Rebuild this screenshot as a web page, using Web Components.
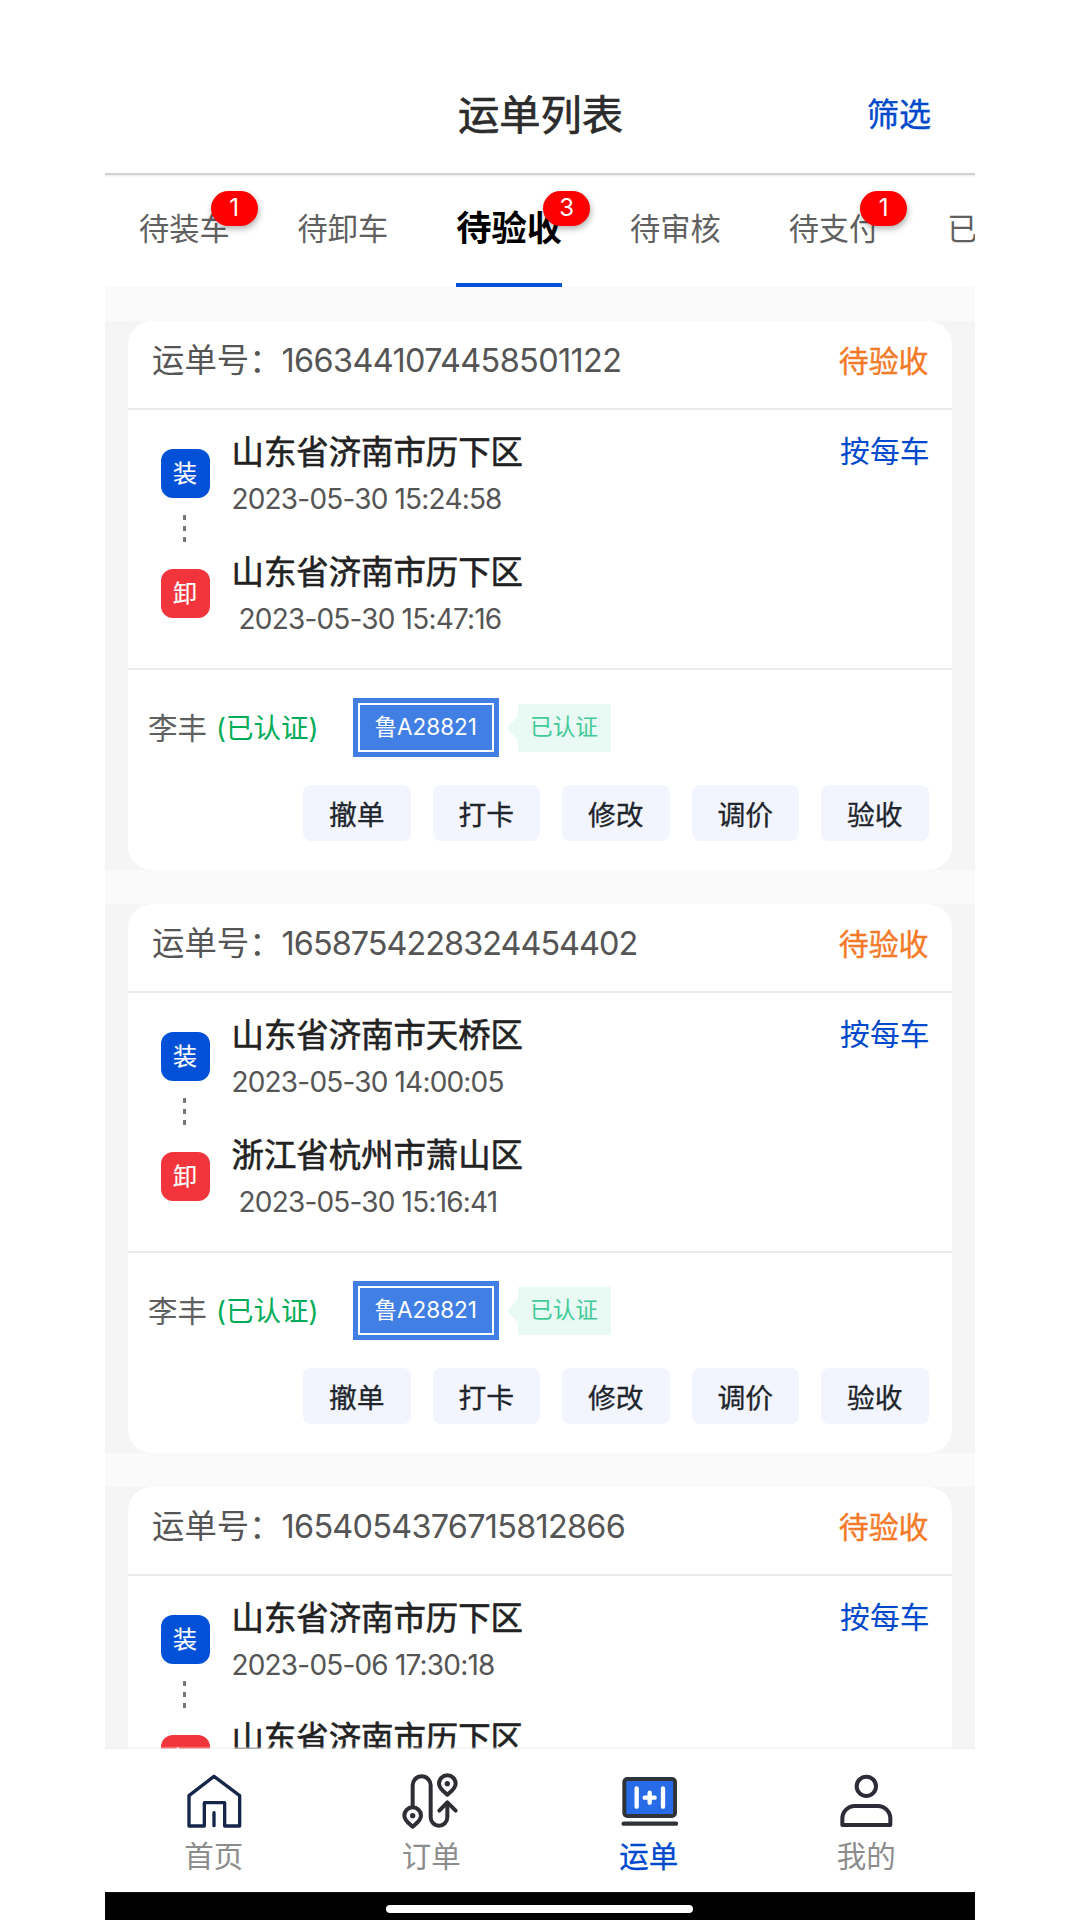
<!DOCTYPE html>
<html lang="zh-CN">
<head>
<meta charset="UTF-8">
<meta name="viewport" content="width=device-width, initial-scale=1.0">
<title>运单列表</title>
<style>
  body {
    margin: 0;
    background: #fff;
    font-family: Inter, "Noto Sans CJK SC", sans-serif;
  }
</style>
</head>
<body>
<waybill-app></waybill-app>

<script>
// Waybill list
const WAYBILLS = [
  {
    no: '1663441074458501122', spacing: '-0.62px',
    from: '山东省济南市历下区', fromTime: '2023-05-30 15:24:58',
    to: '山东省济南市历下区', toTime: '2023-05-30 15:47:16',
    driver: '李丰', plate: '鲁A28821'
  },
  {
    no: '1658754228324454402', spacing: '-0.96px',
    from: '山东省济南市天桥区', fromTime: '2023-05-30 14:00:05',
    to: '浙江省杭州市萧山区', toTime: '2023-05-30 15:16:41',
    driver: '李丰', plate: '鲁A28821'
  },
  {
    no: '1654054376715812866', spacing: '-0.72px',
    from: '山东省济南市历下区', fromTime: '2023-05-06 17:30:18',
    to: '山东省济南市历下区', toTime: ''
  }
];

const ICONS = {
  home: `
    <g fill="none" stroke="#14264a" stroke-width="10" stroke-linejoin="round" stroke-linecap="round">
      <path d="M90 19L167 77V168H122V98H61V168H15V77Z"/>
      <path d="M90 128V167"/>
    </g>`,
  order: `
    <g fill="none" stroke="#2f2e35" stroke-width="12" stroke-linejoin="round" stroke-linecap="round">
      <path d="M35 110V46a27 27 0 0 1 54 0V142a25 25 0 0 0 50 0V98"/>
      <path d="M115 122L139 97L164 122"/>
      <path d="M35 170C24 160 10 151 10 137a25 25 0 0 1 50 0C60 151 46 160 35 170Z"/>
      <path d="M139 74C128 64 114 55 114 41a25 25 0 0 1 50 0C164 55 150 64 139 74Z"/>
    </g>
    <circle cx="35" cy="137" r="8" fill="#2f2e35"/>
    <circle cx="139" cy="41" r="8" fill="#2f2e35"/>`,
  waybill: `
    <rect x="16" y="27" width="152" height="111" rx="9" fill="#276be6" stroke="#303338" stroke-width="12"/>
    <g fill="none" stroke="#fff" stroke-width="13" stroke-linecap="round">
      <path d="M53 55V110M132 55V110M77 83H107M92 68V98"/>
    </g>
    <path d="M14 161H171" stroke="#303338" stroke-width="13" stroke-linecap="round"/>`,
  mine: `
    <g fill="none" stroke="#2d2b38" stroke-width="12" stroke-linejoin="round">
      <circle cx="91" cy="49" r="29"/>
      <path d="M19 165V146a38 38 0 0 1 38 -38H125a38 38 0 0 1 38 38V165Z"/>
    </g>`
};

class NavHeader extends HTMLElement {
  constructor() {
    super();
    this.attachShadow({ mode: 'open' });
  }

  connectedCallback() {
    this.shadowRoot.innerHTML = `
      <style>
        :host {
          display: grid;
          grid-template-columns: 1fr auto 1fr;
          align-items: center;
          height: 116px;
          padding: 57px 44px 0 45px;
          border-bottom: 2px solid #d0d3d2;
          box-shadow: 0 1px 2px #e8e8e8;
          position: relative;
        }
        h1 {
          grid-column: 2;
          margin: 0;
          font-size: 41.3px;
          line-height: 62px;
          font-weight: 400;
          color: #2c2c2c;
          -webkit-text-stroke: 0.7px;
        }
        .action {
          justify-self: end;
          font-size: 32px;
          line-height: 46px;
          color: #0049cc;
          -webkit-text-stroke: 0.4px;
        }
      </style>
      <h1><slot></slot></h1>
      <span class="action">${this.getAttribute('action')}</span>
    `;
  }
}

class TabItem extends HTMLElement {
  constructor() {
    super();
    this.attachShadow({ mode: 'open' });
  }

  connectedCallback() {
    const badge = this.getAttribute('badge');
    this.shadowRoot.innerHTML = `
      <style>
        :host {
          display: block;
          flex: none;
          position: relative;
          box-sizing: border-box;
          height: 112px;
          font-size: 30.2px;
          line-height: 108px;
          color: #606060;
          border-bottom: 4px solid transparent;
        }
        :host([active]) {
          font-size: 35.3px;
          font-weight: 700;
          color: #000;
          border-bottom-color: #0050d8;
        }
        .badge {
          position: absolute;
          top: 16px;
          right: -28px;
          width: 47px;
          height: 35px;
          border-radius: 18px;
          background: #fe0000;
          box-shadow: 1px 3px 6px rgba(0, 0, 0, 0.3);
          color: #fff;
          font-size: 24px;
          font-weight: 400;
          line-height: 34px;
          text-align: center;
        }
      </style>
      <slot></slot>
      ${badge ? `<span class="badge">${badge}</span>` : ''}
    `;
  }
}

class ActionButton extends HTMLElement {
  constructor() {
    super();
    this.attachShadow({ mode: 'open' });
  }

  connectedCallback() {
    this.shadowRoot.innerHTML = `
      <style>
        :host {
          display: block;
          width: 107.5px;
          height: 56px;
          border-radius: 8px;
          background: #f2f5fe;
          color: #20242b;
          font-size: 27.8px;
          line-height: 60px;
          text-align: center;
          -webkit-text-stroke: 0.3px;
        }
      </style>
      <slot></slot>
    `;
  }
}

class RouteStop extends HTMLElement {
  constructor() {
    super();
    this.attachShadow({ mode: 'open' });
  }

  connectedCallback() {
    const isLoad = this.getAttribute('type') === 'load';
    this.shadowRoot.innerHTML = `
      <style>
        :host {
          display: flex;
          gap: 21.5px;
          height: 120px;
        }
        .mark {
          display: flex;
          flex-direction: column;
          align-items: center;
          width: 49px;
          padding-top: 20px;
        }
        .box {
          width: 49px;
          height: 49px;
          border-radius: 12px;
          background: ${isLoad ? '#0050d8' : '#f2353c'};
          color: #fff;
          font-size: 24px;
          line-height: 50px;
          text-align: center;
          text-indent: -1px;
          -webkit-text-stroke: 0.2px;
        }
        .dots {
          display: grid;
          gap: 6px;
          margin: 17px 2px 0 0;
        }
        .dots i {
          width: 3px;
          height: 5px;
          background: #777;
        }
        .city {
          padding-top: 4px;
          font-size: 32.4px;
          line-height: 40px;
          color: #222;
          -webkit-text-stroke: 0.6px;
        }
        .time {
          margin-top: 6px;
          font-size: 28px;
          line-height: 40px;
          color: #555;
          white-space: pre;
          letter-spacing: -0.82px;
        }
      </style>
      <div class="mark">
        <div class="box">${isLoad ? '装' : '卸'}</div>
        ${isLoad ? '<div class="dots"><i></i><i></i><i></i></div>' : ''}
      </div>
      <div>
        <div class="city">${this.getAttribute('city')}</div>
        <div class="time">${isLoad ? '' : ' '}${this.getAttribute('time')}</div>
      </div>
    `;
  }
}

class WaybillCard extends HTMLElement {
  constructor() {
    super();
    this.attachShadow({ mode: 'open' });
  }

  renderDriver(item) {
    return `
      <div class="driver">
        <span class="name">${item.driver}</span>
        <span class="ok">(已认证)</span>
        <div class="plate"><span>${item.plate}</span></div>
        <i class="arrow"></i>
        <div class="tag">已认证</div>
      </div>
      <div class="actions">
        ${['撤单', '打卡', '修改', '调价', '验收'].map((t) => `<action-button>${t}</action-button>`).join('')}
      </div>
    `;
  }

  render(item) {
    this.shadowRoot.innerHTML = `
      <style>
        :host {
          display: block;
          flex: none;
          padding: 0 23.5px 0 23px;
          background: #f5f5f5;
        }
        .card {
          height: 549px;
          border-radius: 24px;
          background: #fff;
          overflow: hidden;
        }
        header {
          display: flex;
          justify-content: space-between;
          box-sizing: border-box;
          height: 89px;
          padding: 0 23px 0 24px;
          border-bottom: 2px solid #e9e9e9;
          line-height: 80px;
        }
        .no {
          display: flex;
          font-size: 32.4px;
          color: #555;
        }
        .no b {
          font-weight: 400;
          letter-spacing: ${item.spacing};
        }
        .status {
          font-size: 29.9px;
          color: #f47a29;
          -webkit-text-stroke: 0.4px;
        }
        .route {
          display: flex;
          justify-content: space-between;
          box-sizing: border-box;
          height: 260px;
          padding: 19px 22px 0 33px;
          border-bottom: 2px solid #ebebeb;
        }
        .price {
          font-size: 29.8px;
          line-height: 45px;
          color: #0049cc;
        }
        .driver {
          display: flex;
          align-items: center;
          height: 59px;
          padding: 28px 0 0 20px;
        }
        .name {
          padding-bottom: 4px;
          font-size: 29.5px;
          color: #606060;
        }
        .ok {
          width: 101px;
          margin: 0 36px 0 9px;
          padding-bottom: 3px;
          font-size: 27.5px;
          color: #00ac58;
          white-space: nowrap;
        }
        .plate {
          box-sizing: border-box;
          width: 145.5px;
          height: 58.5px;
          padding: 5px;
          background: #427fe4;
        }
        .plate span {
          display: block;
          box-sizing: border-box;
          height: 48.5px;
          border: 2px solid #fff;
          color: #fff;
          font-size: 22.5px;
          line-height: 43px;
          text-align: center;
        }
        .arrow {
          margin-left: 8px;
          border: 12px solid transparent;
          border-left: 0;
          border-right: 11px solid #e9f9f3;
        }
        .tag {
          width: 93px;
          height: 48px;
          background: #e9f9f3;
          color: #42cb98;
          font-size: 22.7px;
          line-height: 45px;
          text-align: center;
        }
        .actions {
          display: flex;
          justify-content: flex-end;
          gap: 22px;
          padding: 28px 23px 0 0;
        }
      </style>
      <div class="card">
        <header>
          <div class="no">运单号：<b>${item.no}</b></div>
          <div class="status">待验收</div>
        </header>
        <div class="route">
          <div>
            <route-stop type="load" city="${item.from}" time="${item.fromTime}"></route-stop>
            <route-stop type="unload" city="${item.to}" time="${item.toTime}"></route-stop>
          </div>
          <div class="price">按每车</div>
        </div>
        ${item.driver ? this.renderDriver(item) : ''}
      </div>
    `;
  }
}

class NavItem extends HTMLElement {
  constructor() {
    super();
    this.attachShadow({ mode: 'open' });
  }

  connectedCallback() {
    this.shadowRoot.innerHTML = `
      <style>
        :host {
          display: flex;
          flex: 1;
          flex-direction: column;
          align-items: center;
          padding-top: 21px;
          color: #8c8c8c;
          font-size: 29.5px;
          line-height: 40px;
        }
        :host([active]) {
          color: #0049cc;
          -webkit-text-stroke: 0.3px;
        }
        svg {
          width: 60px;
          height: 60px;
          margin-bottom: 6px;
        }
      </style>
      <svg viewBox="0 0 180 180">${ICONS[this.getAttribute('icon')]}</svg>
      <slot></slot>
    `;
  }
}

class WaybillApp extends HTMLElement {
  constructor() {
    super();
    this.attachShadow({ mode: 'open' });
  }

  connectedCallback() {
    this.shadowRoot.innerHTML = `
      <style>
        :host {
          display: flex;
          flex-direction: column;
          width: 870px;
          height: 1920px;
          margin: 0 auto;
          overflow: hidden;
        }
        .tabs {
          display: flex;
          flex: none;
          gap: 68px;
          height: 112px;
          padding-left: 34px;
          overflow: hidden;
        }
        .list {
          display: flex;
          flex: 1;
          flex-direction: column;
          gap: 34px;
          min-height: 0;
          padding-top: 34px;
          background: #fafafa;
          overflow: hidden;
        }
        .nav {
          display: flex;
          flex: none;
          height: 143px;
          background: #fff;
          box-shadow: 0 -1px 2px #eee;
          position: relative;
        }
        .gesture {
          display: flex;
          flex: none;
          justify-content: center;
          box-sizing: border-box;
          height: 28px;
          padding: 13px 1px 0 0;
          background: #000;
        }
        .gesture i {
          width: 307px;
          height: 8px;
          border-radius: 4px;
          background: #fff;
        }
      </style>
      <nav-header action="筛选">运单列表</nav-header>
      <div class="tabs">
        <tab-item badge="1">待装车</tab-item>
        <tab-item>待卸车</tab-item>
        <tab-item active badge="3">待验收</tab-item>
        <tab-item>待审核</tab-item>
        <tab-item badge="1">待支付</tab-item>
        <tab-item>已</tab-item>
      </div>
      <div class="list"></div>
      <div class="nav">
        <nav-item icon="home">首页</nav-item>
        <nav-item icon="order">订单</nav-item>
        <nav-item icon="waybill" active>运单</nav-item>
        <nav-item icon="mine">我的</nav-item>
      </div>
      <div class="gesture"><i></i></div>
    `;

    const list = this.shadowRoot.querySelector('.list');
    WAYBILLS.forEach((item) => {
      const card = document.createElement('waybill-card');
      card.render(item);
      list.appendChild(card);
    });
  }
}

customElements.define('nav-header', NavHeader);
customElements.define('tab-item', TabItem);
customElements.define('action-button', ActionButton);
customElements.define('route-stop', RouteStop);
customElements.define('waybill-card', WaybillCard);
customElements.define('nav-item', NavItem);
customElements.define('waybill-app', WaybillApp);
</script>
</body>
</html>
